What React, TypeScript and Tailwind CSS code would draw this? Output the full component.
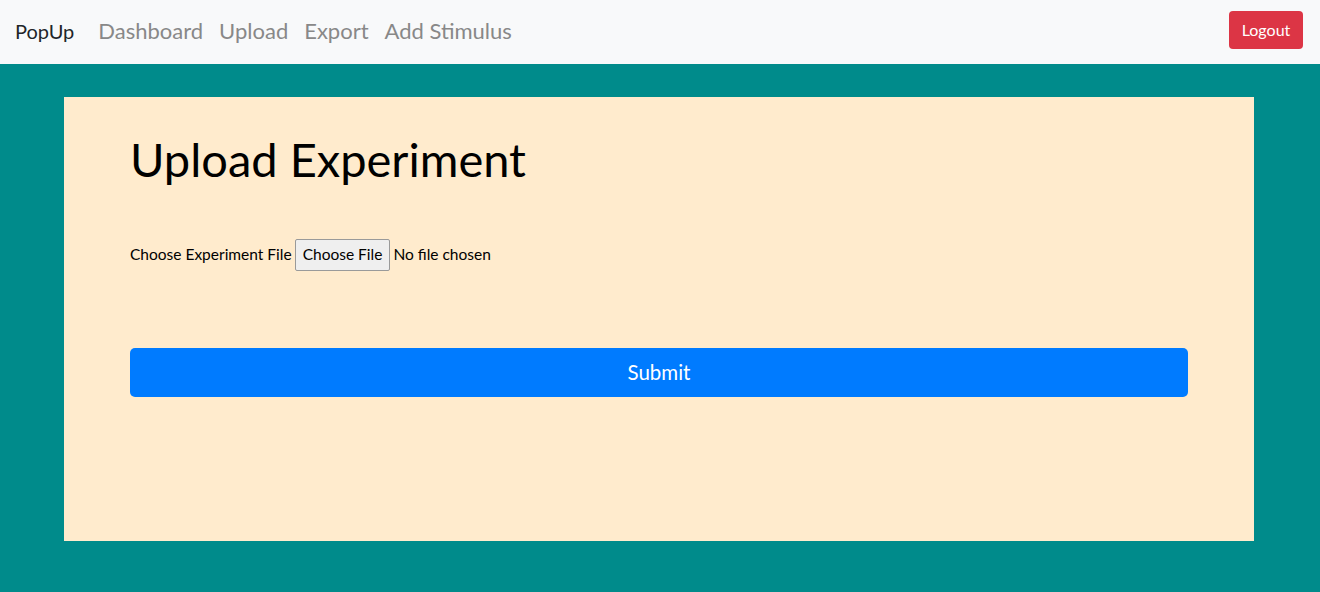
export default function App() {
  const font = { fontFamily: '"Source Sans Pro", Lato, "Noto Sans", sans-serif' };
  return (
    <div className="min-h-[592px] bg-[#008b8b]" style={font}>
      <nav className="h-16 bg-[#f8f9fa] flex items-center pl-[15px] pr-[17px]">
        <div className="flex items-center mb-[3px]">
          <span className="text-[20px] text-[#212529] mr-[24px]">PopUp</span>
          <div className="flex gap-[16px] text-[22px] text-[#888888]">
            <span>Dashboard</span>
            <span>Upload</span>
            <span>Export</span>
            <span>Add Stimulus</span>
          </div>
        </div>
        <button className="ml-auto self-start mt-[11px] h-[38px] w-[74px] rounded-[4px] bg-[#dc3545] text-white text-[16px]">Logout</button>
      </nav>
      <div className="pl-16 pt-[33px] pb-[51px]">
        <div className="bg-[#ffebcd] w-[1190px] h-[444px] px-[66px] pt-[30px]">
          <h1 className="text-[47px] leading-[64px] text-black">Upload Experiment</h1>
          <div className="mt-[48px] flex items-center text-[15.5px] text-black h-[32px]">
            <span className="mr-[3px]">Choose Experiment File</span>
            <span className="h-[32px] px-[7px] border border-[#9a9a9a] bg-[#efefef] rounded-[2px] flex items-center">Choose File</span>
            <span className="ml-[3px]">No file chosen</span>
          </div>
          <button className="mt-[77px] w-full h-[49px] rounded-[5px] bg-[#007bff] text-white text-[20.5px]">Submit</button>
        </div>
      </div>
    </div>
  );
}
